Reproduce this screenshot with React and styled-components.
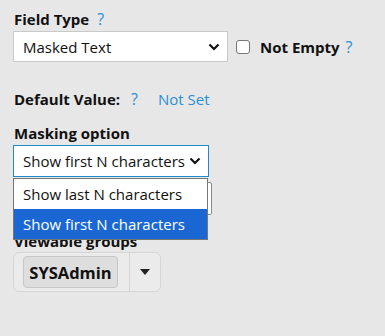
import styled, { createGlobalStyle } from 'styled-components';

const GlobalStyle = createGlobalStyle`
  body {
    margin: 0;
    background: #e7e7e7;
    font-family: "Open Sans", "Liberation Sans", sans-serif;
    color: #111;
  }
`;

const Page = styled.div`
  position: relative;
  width: 385px;
  height: 336px;
  padding: 9px 0 0 13px;
  box-sizing: border-box;
  overflow: hidden;
`;

const Label = styled.div`
  font-size: 15px;
  line-height: 20px;
  font-weight: 700;
  margin-top: ${(p) => p.$top || 0}px;
  padding-left: 1px;
  display: flex;
  align-items: center;
`;

const Help = styled.span`
  color: #2a8fd6;
  font-weight: 400;
  font-size: 16px;
  margin-left: ${(p) => p.$gap || 8}px;
`;

const Row = styled.div`
  display: flex;
  align-items: center;
  margin-top: 2px;
`;

const Select = styled.div`
  box-sizing: border-box;
  width: ${(p) => p.$width}px;
  height: ${(p) => p.$height || 31}px;
  background: #fff;
  border: 1px solid ${(p) => (p.$focused ? '#1f8ad0' : '#c9c9c9')};
  display: flex;
  align-items: center;
  justify-content: space-between;
  padding: 0 7px 0 9px;
  font-size: 15px;
  color: #111;
  margin-top: ${(p) => p.$top || 0}px;
`;

const Check = styled.span`
  box-sizing: border-box;
  width: 14px;
  height: 14px;
  border: 1px solid #767676;
  border-radius: 3px;
  background: #fff;
  margin-left: 8px;
`;

const CheckLabel = styled.span`
  font-size: 15px;
  font-weight: 700;
  margin-left: 10px;
`;

const LinkText = styled.span`
  color: #2a8fd6;
  font-size: 15px;
  font-weight: 400;
  margin-left: 20px;
`;

const NumberInput = styled.div`
  box-sizing: border-box;
  width: 199px;
  height: 33px;
  background: #fff;
  border: 1px solid #8a8a8a;
  border-radius: 2px;
  margin-top: 5px;
`;

const Options = styled.div`
  position: absolute;
  left: 13px;
  top: 178px;
  width: 195px;
  box-sizing: border-box;
  border: 1px solid #767676;
  background: #fff;
`;

const Option = styled.div`
  height: ${(p) => p.$h}px;
  display: flex;
  align-items: center;
  padding-left: 9px;
  font-size: 15px;
  background: ${(p) => (p.$active ? '#1a67d3' : '#fff')};
  color: ${(p) => (p.$active ? '#fff' : '#111')};
`;

const GroupBox = styled.div`
  box-sizing: border-box;
  width: 148px;
  height: 40px;
  margin-top: 1px;
  border: 1px solid #d6d6d6;
  border-radius: 6px;
  background: #ebebeb;
  display: flex;
  align-items: center;
`;

const Chip = styled.div`
  box-sizing: border-box;
  width: 95px;
  height: 32px;
  margin-left: 9px;
  border: 1px solid #c6c6c6;
  border-radius: 4px;
  background: #dedede;
  display: flex;
  align-items: center;
  justify-content: center;
  font-size: 16.5px;
  font-weight: 700;
`;

const Toggle = styled.div`
  margin-left: 11px;
  align-self: stretch;
  border-left: 1px solid #d6d6d6;
  flex: 1;
  display: flex;
  align-items: center;
  justify-content: center;
`;

const Chevron = () => (
  <svg width="12" height="8" viewBox="0 0 12 8">
    <path d="M1.5 1.5 L6 6 L10.5 1.5" fill="none" stroke="#111" strokeWidth="2.2" />
  </svg>
);

export default function App() {
  return (
    <Page>
      <GlobalStyle />
      <Label>
        Field Type<Help>?</Help>
      </Label>
      <Row>
        <Select $width={215}>
          <span>Masked Text</span>
          <Chevron />
        </Select>
        <Check />
        <CheckLabel>Not Empty</CheckLabel>
        <Help $gap={6}>?</Help>
      </Row>
      <Label $top={27}>
        Default Value:<Help $gap={11}>?</Help>
        <LinkText>Not Set</LinkText>
      </Label>
      <Label $top={14}>Masking option</Label>
      <Select $width={196} $height={32} $top={2} $focused>
        <span>Show first N characters</span>
        <Chevron />
      </Select>
      <NumberInput />
      <Label $top={16}>Viewable groups</Label>
      <GroupBox>
        <Chip>SYSAdmin</Chip>
        <Toggle>
          <svg width="10" height="6" viewBox="0 0 10 6">
            <path d="M0 0 H10 L5 6 Z" fill="#222" />
          </svg>
        </Toggle>
      </GroupBox>
      <Options>
        <Option $h={30}>Show last N characters</Option>
        <Option $h={30} $active>
          Show first N characters
        </Option>
      </Options>
    </Page>
  );
}
